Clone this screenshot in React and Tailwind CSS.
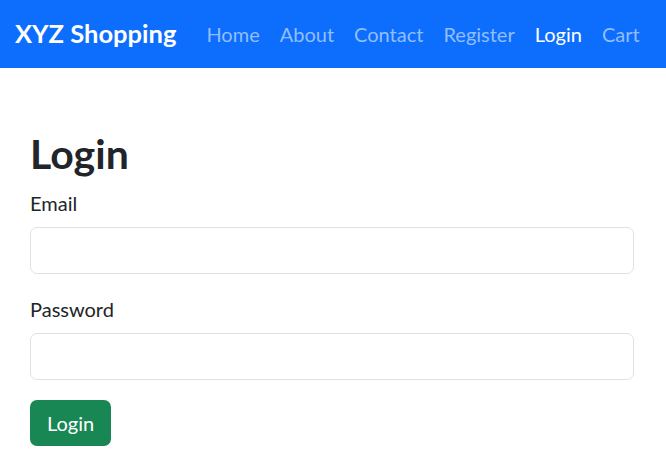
export default function App() {
  const links = [
    { label: "Home", active: false },
    { label: "About", active: false },
    { label: "Contact", active: false },
    { label: "Register", active: false },
    { label: "Login", active: true },
    { label: "Cart", active: false },
  ];

  return (
    <div
      className="min-h-screen bg-white text-[#212529]"
      style={{ fontFamily: 'Lato, "Noto Sans", sans-serif' }}
    >
      {/* Navbar */}
      <nav className="flex h-[68px] items-center whitespace-nowrap bg-[#0d6efd] px-[15px]">
        <a className="mr-[20px] shrink-0 text-[25.5px] font-bold leading-none text-white">
          XYZ Shopping
        </a>
        <ul className="flex items-center">
          {links.map((l) => (
            <li key={l.label}>
              <a
                className={`block px-[10px] text-[20px] leading-[30px] ${
                  l.active ? "text-white" : "text-[#92befe]"
                }`}
              >
                {l.label}
              </a>
            </li>
          ))}
        </ul>
      </nav>

      {/* Content */}
      <div className="pl-[30px] pr-[32px] pt-[62px]">
        <h1 className="mb-[10px] text-[41px] font-bold leading-[48px]">Login</h1>
        <form>
          <div className="mb-[20px]">
            <label className="mb-[9px] block text-[20px] leading-[30px]">Email</label>
            <input
              type="email"
              className="block h-[47px] w-full rounded-[7px] border border-[#dee2e6] bg-white px-[15px] text-[20px] outline-none"
            />
          </div>
          <div className="mb-[20px]">
            <label className="mb-[9px] block text-[20px] leading-[30px]">Password</label>
            <input
              type="password"
              className="block h-[47px] w-full rounded-[7px] border border-[#dee2e6] bg-white px-[15px] text-[20px] outline-none"
            />
          </div>
          <button
            type="button"
            className="h-[46px] rounded-[7px] bg-[#198754] px-[17px] text-[20px] text-white"
          >
            Login
          </button>
        </form>
      </div>
    </div>
  );
}
